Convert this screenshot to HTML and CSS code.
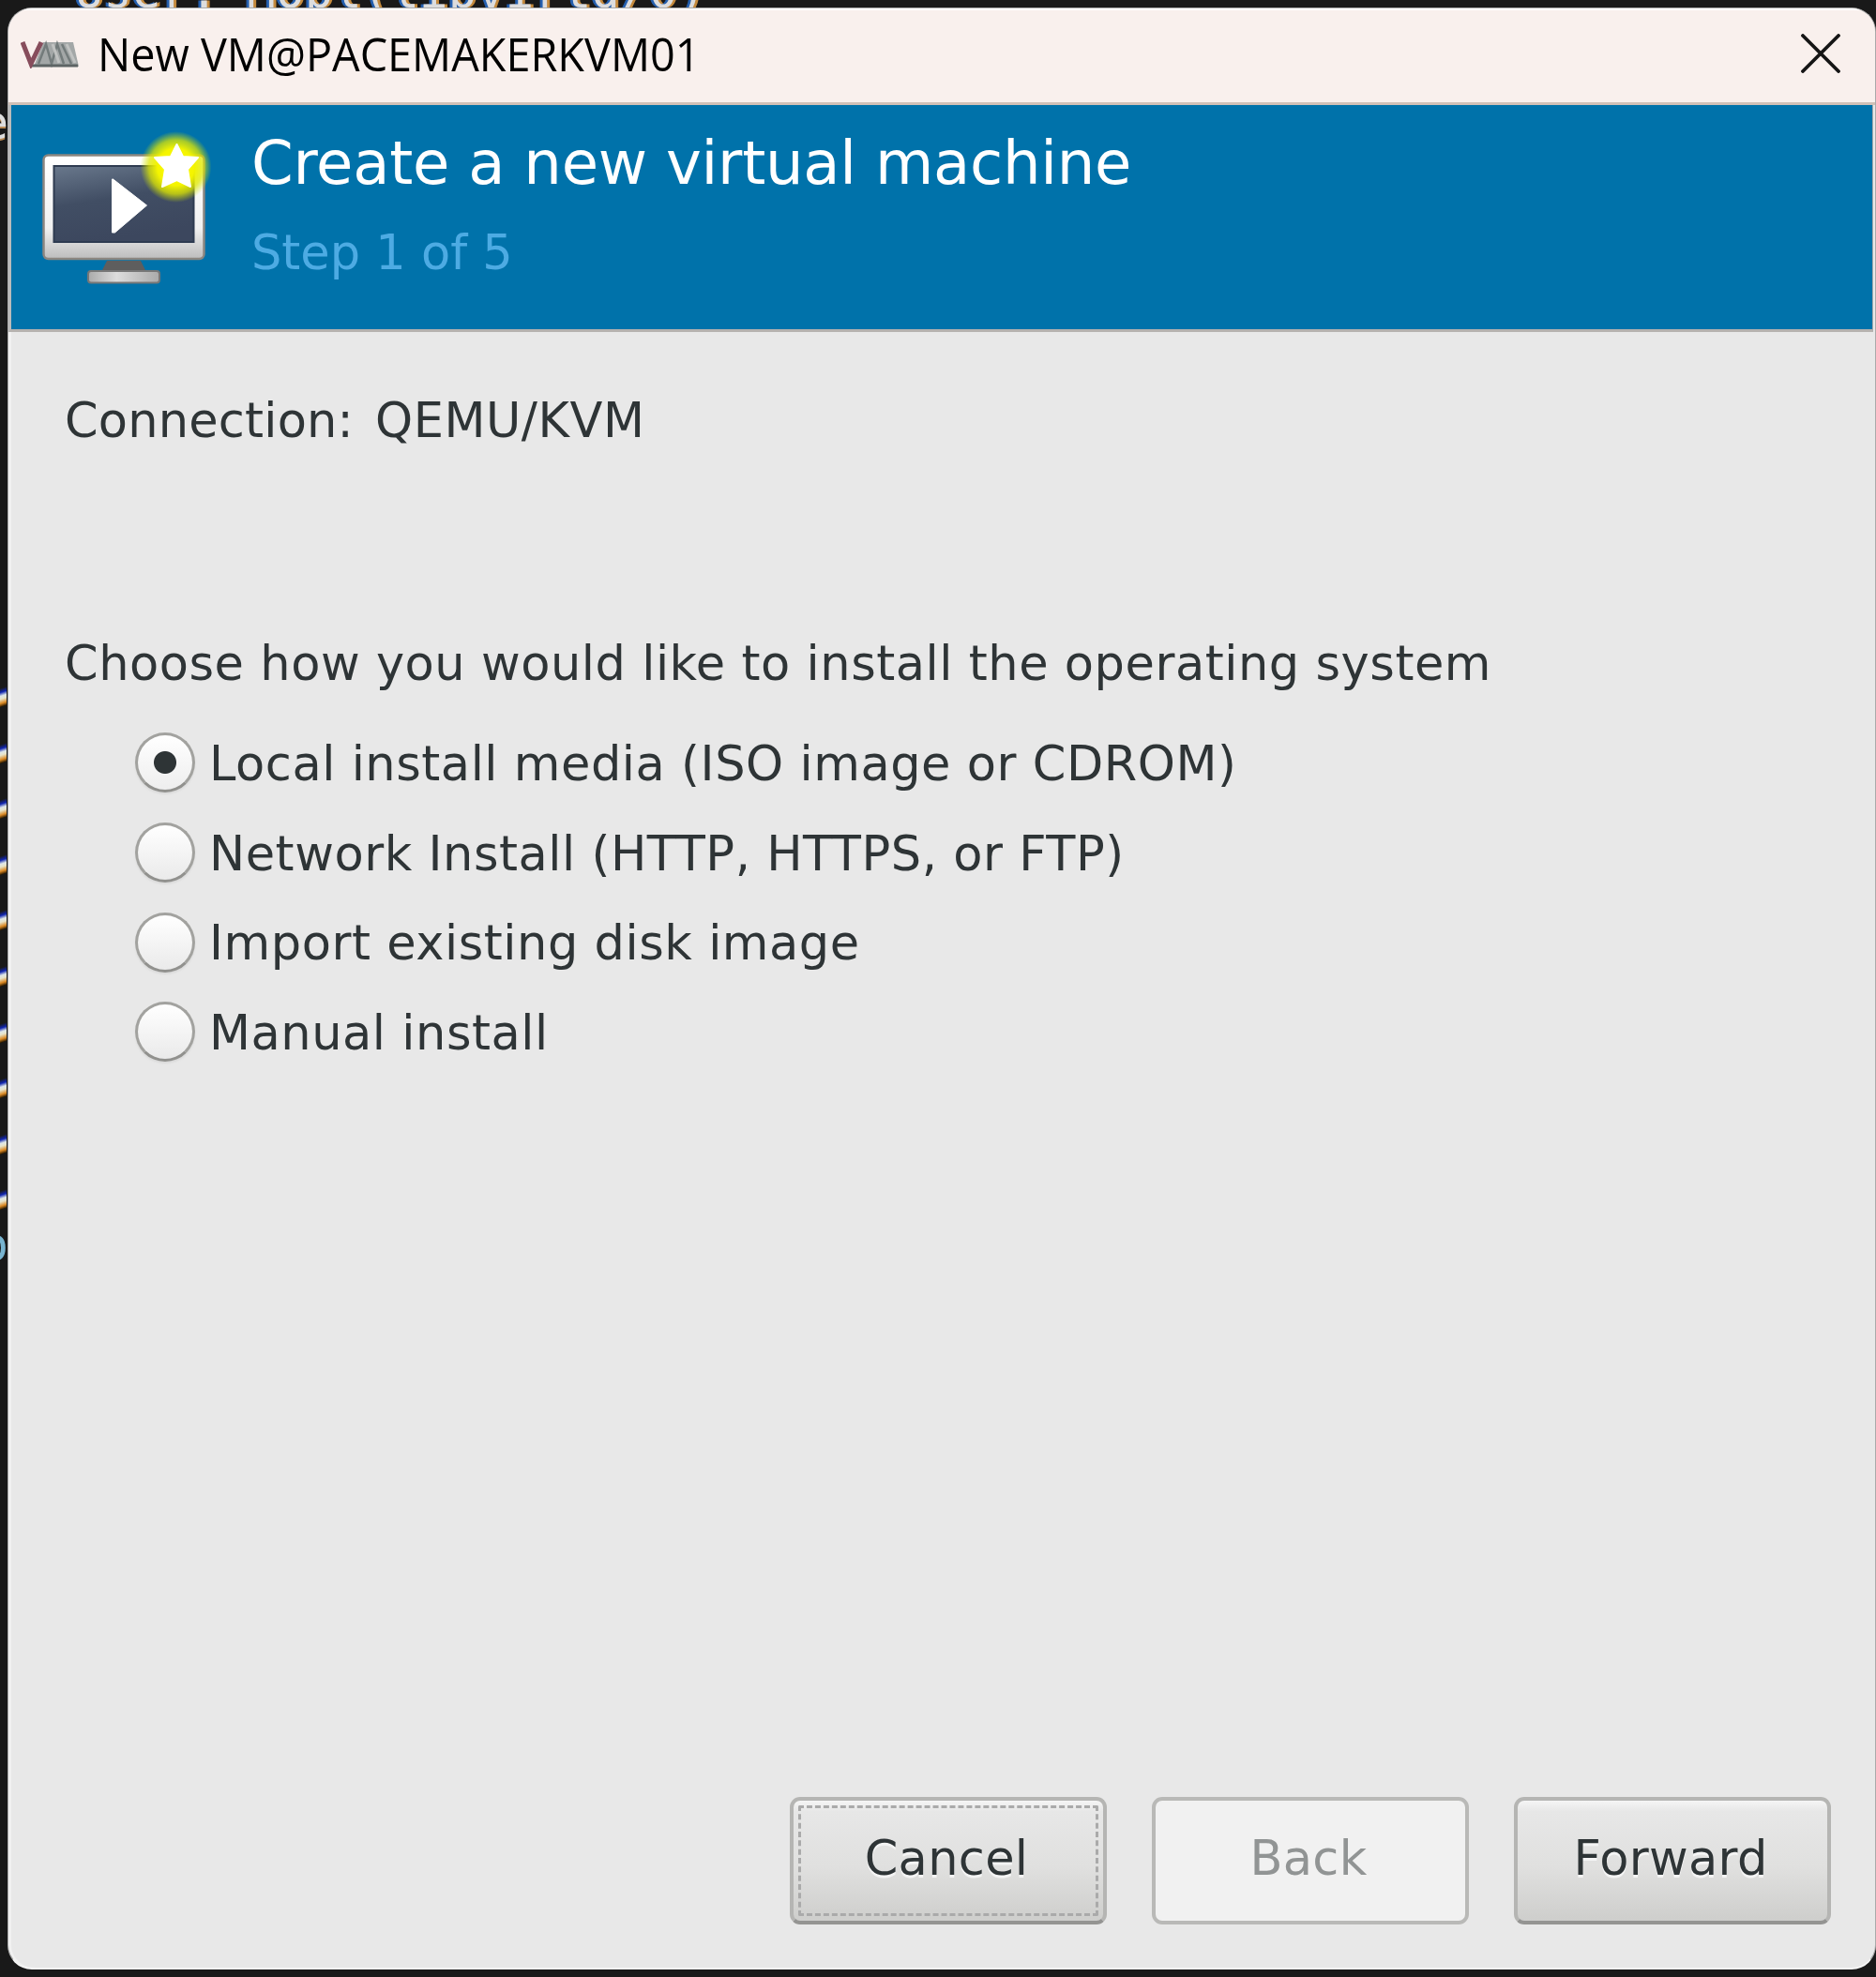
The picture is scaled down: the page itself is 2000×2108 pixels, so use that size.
FILE: index.html
```html
<!DOCTYPE html>
<html lang="en">
<head>
<meta charset="utf-8">
<title>New VM@PACEMAKERKVM01</title>
<link rel="stylesheet" href="styles.css">
</head>
<body>
<div class="terminal" aria-hidden="true">
  <span class="term-line">User: Mobl(libvirtd/0)</span>
  <span class="term-char term-char-e">e</span>
  <div class="marks"><i></i><i></i><i></i><i></i><i></i><i></i><i></i><i></i><i></i><i></i></div>
  <span class="term-char term-char-o">o</span>
</div>
<main class="window">
  <header class="titlebar">
    <svg class="app-icon" viewBox="0 0 64 30">
      <path d="M14 28 L24 2 H56 L62 28 Z" fill="#a3a7a7"/>
      <path d="M19 25 L27 4 L33 25 L39 4 L46 25 M44 4 L54 25" fill="none" stroke="#737b7b" stroke-width="2.500"/>
      <path d="M10 27 H61" stroke="#5d6464" stroke-width="3"/>
      <path d="M34 4 L41 24 M49 4 L58 24" stroke="#c0c2c1" stroke-width="3"/>
      <path d="M2 2 L11 25 L22 2" fill="none" stroke="#874d5c" stroke-width="5"/>
    </svg>
    <h1 class="window-title"><span>New VM@PACEMAKERKVM01</span></h1>
    <button class="close" aria-label="Close">
      <svg viewBox="0 0 42 42"><path d="M2 2 L40 40 M40 2 L2 40" stroke="#151515" stroke-width="3.800" stroke-linecap="round"/></svg>
    </button>
  </header>
  <section class="banner">
    <svg class="vm-icon" viewBox="0 0 182 166">
      <defs>
        <linearGradient id="case" x1="0" y1="0" x2="0" y2="1"><stop offset="0" stop-color="#fff"/><stop offset=".7" stop-color="#f1f1f1"/><stop offset="1" stop-color="#bdbdbd"/></linearGradient>
        <linearGradient id="screen" x1="0" y1="0" x2=".3" y2="1"><stop offset="0" stop-color="#69788c"/><stop offset=".5" stop-color="#414e64"/><stop offset="1" stop-color="#3c475e"/></linearGradient>
        <linearGradient id="foot" x1="0" y1="0" x2="1" y2="0"><stop offset="0" stop-color="#aaa"/><stop offset=".4" stop-color="#ddd"/><stop offset="1" stop-color="#aaa"/></linearGradient>
        <radialGradient id="glow"><stop offset="0" stop-color="#ff0"/><stop offset=".52" stop-color="#f4f400"/><stop offset=".76" stop-color="#dfe800" stop-opacity=".75"/><stop offset="1" stop-color="#c8e000" stop-opacity="0"/></radialGradient>
      </defs>
      <path d="M70 138 H106 L112 150 H64 Z" fill="#5e5e5e"/>
      <rect x="50" y="149" width="76" height="12.500" rx="3" fill="url(#foot)" stroke="#777" stroke-width="2"/>
      <rect x="2.500" y="25.500" width="171" height="110.500" rx="5" fill="url(#case)" stroke="#8b8680" stroke-width="2.500"/>
      <rect x="13.500" y="37" width="149" height="81" fill="url(#screen)" stroke="#2e3b50" stroke-width="2"/>
      <path d="M76.500 51 L112.500 79 L78.500 108 H75.500 V51 Z" fill="#fff" stroke="#fff" stroke-width="1"/>
      <circle cx="143.500" cy="38" r="38" fill="url(#glow)"/>
      <path d="M144.500 14 L151 27 L167 28 L156 40.500 L159 59 L144.500 52 L129 59 L132 40.500 L121 28 L138 27 Z" fill="#fff" stroke="#fff" stroke-width="2" stroke-linejoin="round"/>
    </svg>
    <div class="banner-text">
      <h2 class="banner-title">Create a new virtual machine</h2>
      <p class="step">Step 1 of 5</p>
    </div>
  </section>
  <section class="content">
    <div class="connection"><span>Connection:</span><span>QEMU/KVM</span></div>
    <p class="prompt">Choose how you would like to install the operating system</p>
    <div class="options">
      <label class="option"><input type="radio" name="method" checked><span>Local install media (ISO image or CDROM)</span></label>
      <label class="option"><input type="radio" name="method"><span>Network Install (HTTP, HTTPS, or FTP)</span></label>
      <label class="option"><input type="radio" name="method"><span>Import existing disk image</span></label>
      <label class="option"><input type="radio" name="method"><span>Manual install</span></label>
    </div>
  </section>
  <footer class="actions">
    <button class="btn focused">Cancel</button>
    <button class="btn" disabled>Back</button>
    <button class="btn">Forward</button>
  </footer>
</main>
</body>
</html>
```
FILE: styles.css
```css
* { box-sizing: border-box; }
body {
  margin: 0;
  width: 2000px;
  height: 2108px;
  padding: 8px 0 8px 8px;
  overflow: hidden;
  position: relative;
  background: #191919;
  color: #2e3436;
  font: 51px/60px "DejaVu Sans", sans-serif;
  letter-spacing: .540px;
}
h1, h2, p { margin: 0; font-weight: 400; }
.terminal { position: absolute; inset: 0; overflow: hidden; color: #ddd; font: 50px/60px "DejaVu Sans Mono", monospace; letter-spacing: .500px; }
.term-line { position: absolute; left: 80px; top: -39px; white-space: pre; text-shadow: -3px 0 #245fae, 3px 0 #c48a3d; }
.term-char { position: absolute; left: -21px; }
.term-char-e { top: 101px; text-shadow: 0 2px #b98a55; }
.term-char-o { top: 1297px; color: #78b4d0; }
.marks { position: absolute; left: 0; top: 733px; display: flex; flex-direction: column; gap: 39.600px; }
.marks i { width: 7px; height: 20px; transform: skewY(-18deg); background: linear-gradient(#191919 0, #1025b0 22%, #dfe7e7 42%, #e8e4c8 58%, #d98722 82%, #2a1900); }
.window {
  position: relative;
  display: flex;
  flex-direction: column;
  width: 1992px;
  height: 2092px;
  border: 1px solid #aaa;
  border-bottom: 2px solid #f6f6f6;
  border-radius: 26px;
  overflow: hidden;
  background: #e8e8e8;
  box-shadow: inset 3px 0 #f1f1f1;
}
.titlebar {
  display: flex;
  align-items: center;
  height: 103px;
  padding: 0 37px 6px 13px;
  background: #f9f0ed;
  border-top: 2px solid #fff;
  border-bottom: 3px solid #d0c0b7;
}
.app-icon { width: 64px; height: 30px; margin-top: 2px; }
.window-title { margin-left: 18px; width: 640px; color: #000; font: 50px/60px "Open Sans", sans-serif; letter-spacing: 0; white-space: nowrap; }
.window-title span { display: inline-block; transform: scaleX(.936); transform-origin: left; }
.close { display: flex; margin-left: auto; padding: 0; border: 0; background: none; }
.close svg { width: 42px; height: 42px; }
.banner {
  display: flex;
  height: 242px;
  padding: 28px 32px 0;
  margin-right: 2px;
  border-left: 3px solid #bbb;
  border-right: 1px solid #aaa;
  border-bottom: 3px solid #b5b2af;
  background: #0072aa;
}
.vm-icon { width: 182px; height: 166px; }
.banner-text { margin: -4px 0 0 42px; white-space: nowrap; }
.banner-title { color: #fff; font-size: 64px; line-height: 76px; letter-spacing: -.250px; }
.step { margin-top: 28px; color: #4dabe3; letter-spacing: 0; }
.content { padding: 65px 60px 0; white-space: nowrap; }
.connection { display: flex; gap: 23px; }
.connection span:first-child { letter-spacing: .200px; }
.prompt { margin-top: 199px; }
.options { margin: 29px 0 0 75px; }
.option { display: flex; align-items: center; height: 95.700px; gap: 15px; }
.option input {
  appearance: none;
  width: 64px;
  height: 64px;
  margin: -3px 0 0;
  border: 3px solid #a2a29f;
  border-bottom-color: #91918e;
  border-radius: 50%;
  background: linear-gradient(#fff, #eaeaea);
  box-shadow: 0 2px 2px #dadada;
}
.option input:checked { background: radial-gradient(circle, #2e3436 0 11.500px, transparent 12.500px), linear-gradient(#fff, #eee); }
.actions { display: flex; justify-content: flex-end; gap: 48px; margin-top: auto; padding: 0 47px 46px 0; }
.btn {
  width: 338px;
  height: 136px;
  padding: 0 4px 4px 0;
  border: 4px solid #b5b5b3;
  border-bottom-color: #949492;
  border-radius: 11px;
  color: #2e3436;
  font: inherit;
  letter-spacing: .300px;
  text-shadow: 0 3px #f4f4f4;
  background: linear-gradient(#f5f5f5 0, #e7e7e7 9%, #e0e0df 55%, #cececc 100%);
}
.btn:disabled { color: #919494; border-color: #b9b9b7; background: #f1f1f1; text-shadow: none; }
.focused { outline: 3px dashed #aaa; outline-offset: -12px; }
```
